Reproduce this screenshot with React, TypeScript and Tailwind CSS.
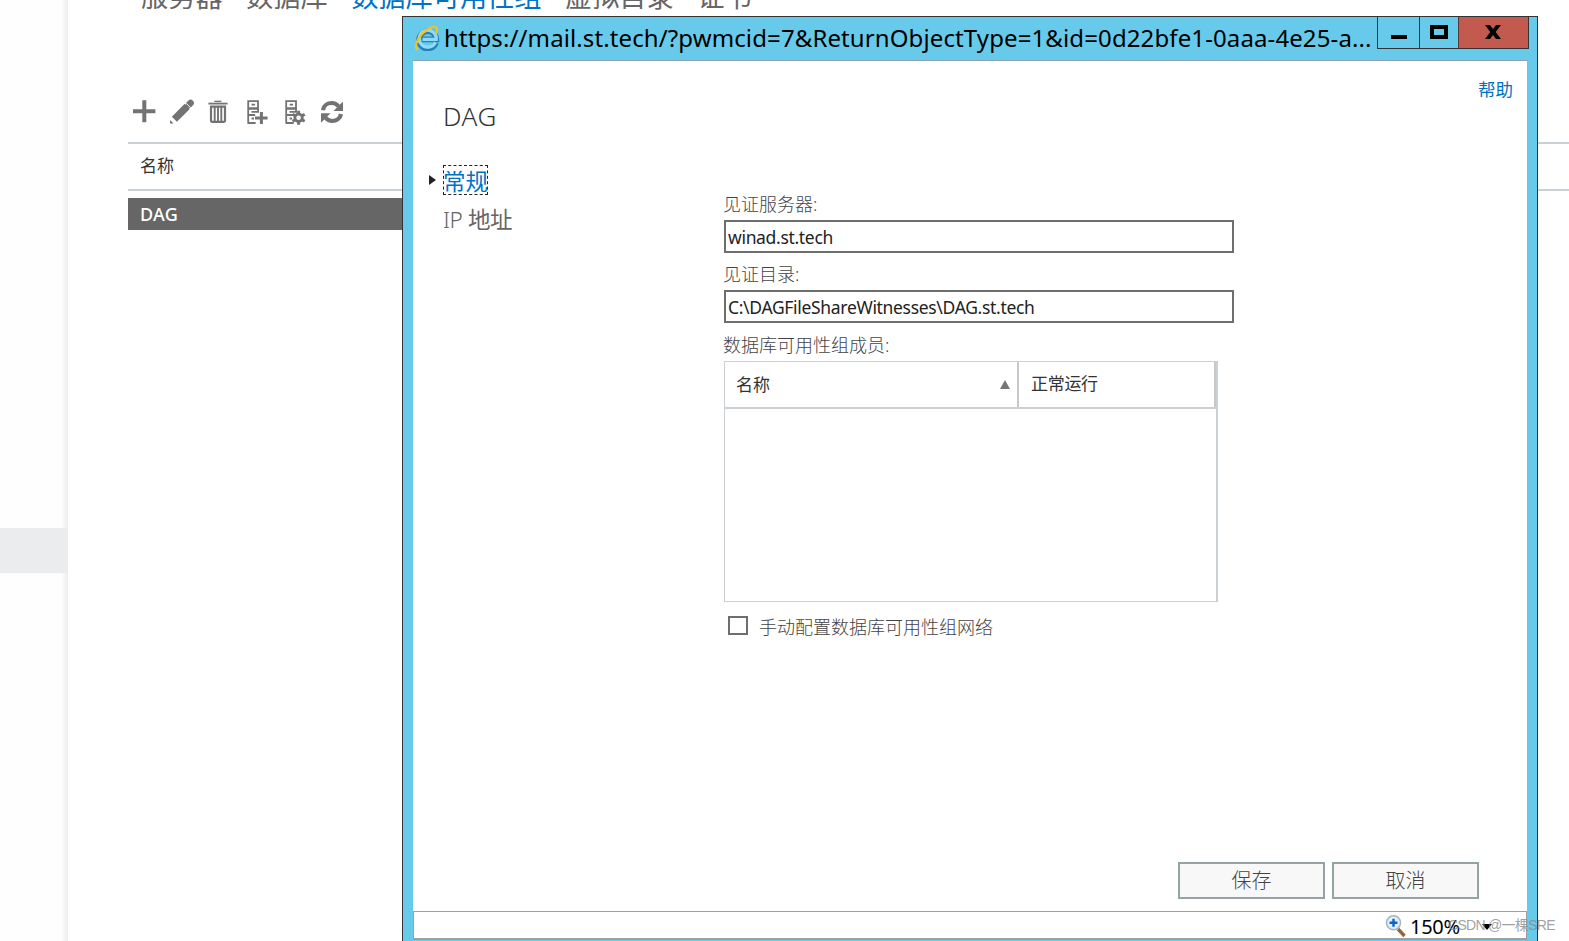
import type { ReactNode } from 'react';

const tabs = [
  { label: '服务器', active: false },
  { label: '数据库', active: false },
  { label: '数据库可用性组', active: true },
  { label: '虚拟目录', active: false },
  { label: '证书', active: false },
];

function ToolButton({ title, children }: { title: string; children: ReactNode }) {
  return (
    <button aria-label={title} className="w-[26px] h-[26px] text-[#737373]">
      <svg width="26" height="26" viewBox="0 0 26 26" fill="none" stroke="currentColor">
        {children}
      </svg>
    </button>
  );
}

function ServerOutline() {
  return (
    <>
      <path d="M3.2 24.7V2.1H13V9.5H3.2" strokeWidth="1.8" />
      <path d="M6.6 5.6h3.5M3.2 9.5h10M6.5 12.8h7.5M3.2 16h7M13 9v4M6.5 19.500h2.500M3.2 24h7.500" strokeWidth="1.8" />
    </>
  );
}

function Toolbar() {
  return (
    <div className="flex gap-3 ml-[3px]">
      <ToolButton title="新建">
        <path d="M2 12.3h22.4M13.3 1.3v22" strokeWidth="4" />
      </ToolButton>
      <ToolButton title="编辑">
        <path d="M5.4 20.2L18.2 7.4" strokeWidth="7.2" />
        <path d="M20.2 5.4l1.4-1.4" strokeWidth="6.6" strokeLinecap="round" />
        <path d="M17.2 4.3l4.6 4.6" stroke="#fff" strokeWidth="0.9" />
        <path d="M1 21v3.4h3.6z" fill="currentColor" stroke="none" />
      </ToolButton>
      <ToolButton title="删除">
        <path d="M1.4 4.6h19.2" strokeWidth="1.8" />
        <path d="M7.4 2.4h7" strokeWidth="1.4" />
        <path d="M3 7.6h16M4 7v14.8q0 1 1 1h12q1 0 1-1V7" strokeWidth="2.2" />
        <path d="M7.7 8v14M11 8v14M14.3 8v14" strokeWidth="1.9" />
      </ToolButton>
      <ToolButton title="管理成员">
        <ServerOutline />
        <path d="M10 18.9h12.600M16.400 13v12" strokeWidth="3" />
      </ToolButton>
      <ToolButton title="管理网络">
        <ServerOutline />
        <circle cx="15.6" cy="18.8" r="3.7" strokeWidth="2.8" />
        <path
          d="M15.6 11.8v3M15.6 22.8v3M9.5 15.3l2.6 1.5M19.1 20.8l2.6 1.5M9.5 22.3l2.6-1.5M19.1 16.8l2.6-1.5"
          strokeWidth="3"
        />
      </ToolButton>
      <ToolButton title="刷新">
        <path d="M2 11.2C2.6 6.6 6.4 4 10.8 4c3 0 5 1.2 6.6 3.2" strokeWidth="4.2" />
        <path d="M22 2.5v9.5h-9.5z" fill="currentColor" stroke="none" />
        <path d="M20 15c-.8 4.4-4.4 7-8.8 7-3 0-5-1.2-6.6-3.2" strokeWidth="4.2" />
        <path d="M0 23.7v-9.500h9.500z" fill="currentColor" stroke="none" />
      </ToolButton>
    </div>
  );
}

function IeLogo() {
  return (
    <svg width="26" height="26" viewBox="0 0 26 26" fill="none">
      <path d="M22 17.600A8.700 8.700 0 1 1 22.400 14.400H8" stroke="#2a80b5" strokeWidth="5.600" />
      <path d="M21.400 17.300A8.500 8.500 0 1 1 22.200 14.400H8.500" stroke="#8fdcfa" strokeWidth="3.400" />
      <path
        d="M3.3 24.5C-.5 21 4.5 11 12 5.4c5-3.8 9.6-4.800 10.800-2.200.6 1.400 0 3-.8 4.600"
        stroke="#f5c21c"
        strokeWidth="2.2"
        strokeLinecap="round"
      />
    </svg>
  );
}

function TitleBar() {
  return (
    <div className="flex h-[43px] pl-[11px] pr-2">
      <div className="pt-[8px] w-[30px] shrink-0">
        <IeLogo />
      </div>
      <div className="flex-1 whitespace-nowrap text-[24px] leading-[42px] tracking-[0.11px] text-black">
        https://mail.st.tech/?pwmcid=7&amp;ReturnObjectType=1&amp;id=0d22bfe1-0aaa-4e25-a...
      </div>
      <div className="flex h-[31px] box-content border border-t-0 border-[#333] shrink-0">
        <button aria-label="最小化" className="w-[41px] flex justify-center pt-[18px]">
          <span className="w-4 h-1 bg-black" />
        </button>
        <button aria-label="最大化" className="w-[39px] border-l border-[#333] flex justify-center pt-2">
          <span className="w-[18px] h-[14px] border-4 border-black" />
        </button>
        <button aria-label="关闭" className="w-[70px] border-l border-[#5a3a38] bg-[#c35a50] flex justify-center pt-2 pr-px">
          <svg width="18" height="14" viewBox="0 0 18 14">
            <path d="M1 0h5l3 4 3-4h5l-5.3 7L17 14h-5L9 10l-3 4H1l5.3-7z" fill="#000" />
          </svg>
        </button>
      </div>
    </div>
  );
}

function Field({ label, value }: { label: string; value: string }) {
  return (
    <label className="block h-[70px]">
      <span className="block h-[27px] leading-[23px] text-[18px] font-light text-[#444]">{label}</span>
      <input
        readOnly
        value={value}
        className="block ml-px w-[510px] h-[33px] border-2 border-[#6e6e6e] px-[2px] text-[17.5px] tracking-[-0.32px] text-[#222] bg-white"
      />
    </label>
  );
}

function MembersTable() {
  return (
    <div className="ml-px w-[494px] h-[241px] border border-r-2 border-[#cad0d4]">
      <div className="flex h-[47px] border-b-2 border-[#cad0d4] text-[17px] leading-[44px] text-[#333]">
        <div className="w-[294px] pl-[11px] pr-[7px] flex items-center justify-between border-r-2 border-[#c8c8c8]">
          名称
          <span className="border-x-[5.5px] border-x-transparent border-b-[9px] border-b-[#777]" />
        </div>
        <div className="flex-1 pl-[12px] border-r-2 border-[#c8c8c8] tracking-[-0.3px]">正常运行</div>
      </div>
    </div>
  );
}

function StatusBar() {
  return (
    <div className="flex h-[29px] border border-b-2 border-[#a0a0a0] bg-white justify-end pr-[34px]">
      <svg className="mt-[2px] mr-[3px]" width="22" height="24" viewBox="0 0 22 24" fill="none">
        <path d="M13 15l6.5 7" stroke="#9a6339" strokeWidth="3.4" />
        <circle cx="8.5" cy="8.8" r="7" fill="#e4f1fc" stroke="#a3b5c6" strokeWidth="1.5" />
        <path d="M4.5 8.8h8M8.5 4.8v8" stroke="#0b62cf" strokeWidth="2.4" />
      </svg>
      <span className="w-[72px] text-[20px] leading-[30px] tracking-[-0.3px] text-black">150%</span>
      <svg className="mt-[12px]" width="10" height="6" viewBox="0 0 10 6">
        <path d="M0 0h10L5 6z" fill="#000" />
      </svg>
    </div>
  );
}

function DagWindow() {
  return (
    <div className="absolute left-[402px] top-[16px] w-[1136px] h-[940px] border border-[#333] bg-[#67caea]">
      <TitleBar />
      <div className="mx-[10px] h-[851px] border-t border-[#8aa3ae] bg-white flex flex-col">
        <div className="flex-1 flex">
          <div className="w-[310px] pl-[30px] pt-[36px] shrink-0">
            <h1 className="text-[26px] leading-[38px] font-light tracking-[0.6px] text-[#333]">DAG</h1>
            <div className="flex items-center mt-[30px] -ml-[14px]">
              <span className="w-[14px]">
                <span className="block w-0 border-y-[5.5px] border-y-transparent border-l-[7px] border-l-[#222]" />
              </span>
              <a className="border border-dashed border-[#222] h-[30px] w-[45px] text-[22.5px] leading-[31px] whitespace-nowrap text-[#0072c6] -indent-px">
                常规
              </a>
            </div>
            <div className="mt-[8px] text-[22.5px] leading-[33px] tracking-[-0.4px] text-[#666]">
              <span className="font-light">IP</span> 地址
            </div>
          </div>
          <div className="pt-[132px]">
            <Field label="见证服务器:" value="winad.st.tech" />
            <Field label="见证目录:" value="C:\DAGFileShareWitnesses\DAG.st.tech" />
            <div className="h-[28px] leading-[25px] text-[18px] font-light text-[#444]">数据库可用性组成员:</div>
            <MembersTable />
            <label className="flex items-center mt-[13px] ml-[5px] text-[18px] font-light text-[#444] leading-[24px]">
              <span className="w-[20px] h-[19px] -mt-[3px] border-2 border-[#6e6e6e] mr-[11px]" />
              手动配置数据库可用性组网络
            </label>
          </div>
          <a className="ml-auto mr-[14px] mt-[15px] text-[17.5px] leading-[26px] text-[#0072c6]">帮助</a>
        </div>
        <div className="flex justify-end gap-[7px] pr-[48px] pb-[12px] text-[20px] font-light text-[#444]">
          <button className="w-[147px] h-[37px] border-2 border-[#95a3a5] bg-[#f8f8f8]">保存</button>
          <button className="w-[147px] h-[37px] border-2 border-[#95a3a5] bg-[#f8f8f8]">取消</button>
        </div>
      </div>
      <div className="mx-[10px]">
        <StatusBar />
      </div>
    </div>
  );
}

export default function App() {
  return (
    <div className="relative w-[1569px] h-[941px] overflow-hidden bg-white flex font-['Noto_Sans','Noto_Sans_CJK_SC',sans-serif]">
      <aside className="w-[68px] shrink-0 bg-linear-to-r from-[#fefefe] from-90% to-[#ececec]">
        <div className="mt-[528px] h-[45px] bg-[#ebecee]" />
      </aside>

      <main className="flex-1 pl-[60px]">
        <nav className="flex gap-[23.5px] pl-[13px] -mt-[17px] h-[28px] text-[27.2px] leading-[28px] whitespace-nowrap text-[#666]">
          {tabs.map((tab) => (
            <span key={tab.label} className={tab.active ? 'text-[#0072c6]' : ''}>
              {tab.label}
            </span>
          ))}
        </nav>
        <div className="h-[88px]" />
        <Toolbar />
        <div className="mt-[17px] h-[49px] border-y-2 border-[#cad0d4] pl-3 text-[17px] leading-[43px] text-[#333]">
          名称
        </div>
        <div className="mt-[7px] w-[1200px] h-8 bg-[#666] pl-3 text-[18px] font-medium leading-[33px] tracking-[0.2px] text-white">
          DAG
        </div>
      </main>

      <DagWindow />

      {/* Watermark */}
      <div className="absolute left-[1448px] top-[915px] text-[14px] leading-[20px] tracking-[-0.7px] text-[#888]/80 whitespace-nowrap font-['Liberation_Sans','Noto_Sans_CJK_SC',sans-serif]">
        CSDN @一棵SRE
      </div>
    </div>
  );
}
